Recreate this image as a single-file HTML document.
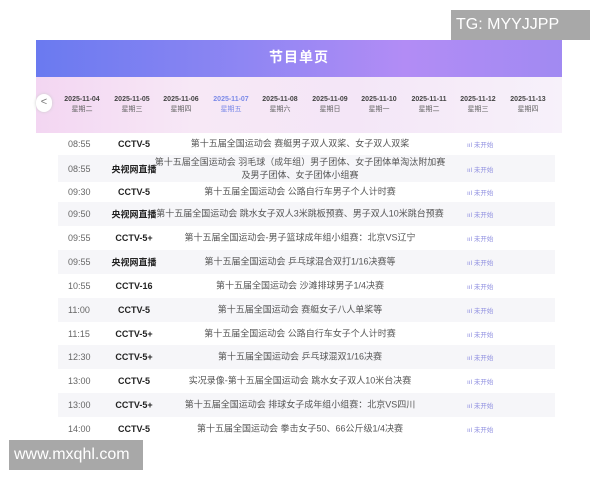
<!DOCTYPE html>
<html><head><meta charset="utf-8"><style>
*{margin:0;padding:0;box-sizing:border-box}
body{width:600px;height:480px;background:#fff;position:relative;overflow:hidden;font-family:"Liberation Sans","Noto Sans CJK SC",sans-serif}
.banner{position:absolute;left:36px;top:40px;width:526px;height:37px;background:linear-gradient(90deg,#6a7af0 0%,#8f86f3 40%,#b28cf5 70%,#a18af2 100%);color:#fff;font-size:14px;font-weight:bold;text-align:center;line-height:34px;letter-spacing:1px}
.dates{position:absolute;left:36px;top:77px;width:526px;height:56px;background:linear-gradient(90deg,#f3d6f2 0%,#f7e8f6 30%,#f4e6f7 60%,#f7f1fa 100%)}
.arrow{position:absolute;left:36px;top:94px;width:16px;height:18px;border-radius:9px;background:#fff;box-shadow:0 0 3px #ccc;color:#777;font-size:11px;text-align:center;line-height:17px}
.d{position:absolute;top:95px;width:50px;margin-left:-25px;text-align:center;font-size:7px;font-weight:bold;color:#444;line-height:10px}
.d span{display:block;font-weight:normal;color:#666}
.d.a,.d.a span{color:#7b8ae8}
.row{position:absolute;left:58px;width:497px;font-size:9px;color:#555}
.row.g{background:#f6f6f9}
.row div{position:absolute;top:50%;transform:translateY(-50%);white-space:nowrap}
.t{left:10px;color:#666;font-size:9px}
.c{left:48px;width:56px;text-align:center;font-weight:bold;color:#222;font-size:9px}
.x{left:92px;width:300px;text-align:center;line-height:13px}
.s{left:409px;color:#8e8ee0;font-size:6.5px}
.wm{position:absolute;background:#a8a8a8;color:#fff;font-size:16px;line-height:30px;padding-left:5px;white-space:nowrap}
</style></head><body>
<div class="banner">节目单页</div>
<div class="dates"></div>
<div class="arrow">&lt;</div>
<div class="d" style="left:82px">2025-11-04<span>星期二</span></div>
<div class="d" style="left:132px">2025-11-05<span>星期三</span></div>
<div class="d" style="left:181px">2025-11-06<span>星期四</span></div>
<div class="d a" style="left:231px">2025-11-07<span>星期五</span></div>
<div class="d" style="left:280px">2025-11-08<span>星期六</span></div>
<div class="d" style="left:330px">2025-11-09<span>星期日</span></div>
<div class="d" style="left:379px">2025-11-10<span>星期一</span></div>
<div class="d" style="left:429px">2025-11-11<span>星期二</span></div>
<div class="d" style="left:478px">2025-11-12<span>星期三</span></div>
<div class="d" style="left:528px">2025-11-13<span>星期四</span></div>

<div class="row" style="top:133px;height:22px"><div class="t">08:55</div><div class="c">CCTV-5</div><div class="x">第十五届全国运动会 赛艇男子双人双桨、女子双人双桨</div><div class="s">ııl 未开始</div></div>
<div class="row g" style="top:155px;height:27px"><div class="t">08:55</div><div class="c">央视网直播</div><div class="x">第十五届全国运动会 羽毛球（成年组）男子团体、女子团体单淘汰附加赛<br>及男子团体、女子团体小组赛</div><div class="s">ııl 未开始</div></div>
<div class="row" style="top:182px;height:20px"><div class="t">09:30</div><div class="c">CCTV-5</div><div class="x">第十五届全国运动会 公路自行车男子个人计时赛</div><div class="s">ııl 未开始</div></div>
<div class="row g" style="top:202px;height:24px"><div class="t">09:50</div><div class="c">央视网直播</div><div class="x">第十五届全国运动会 跳水女子双人3米跳板预赛、男子双人10米跳台预赛</div><div class="s">ııl 未开始</div></div>
<div class="row" style="top:226px;height:24px"><div class="t">09:55</div><div class="c">CCTV-5+</div><div class="x">第十五届全国运动会-男子篮球成年组小组赛：北京VS辽宁</div><div class="s">ııl 未开始</div></div>
<div class="row g" style="top:250px;height:24px"><div class="t">09:55</div><div class="c">央视网直播</div><div class="x">第十五届全国运动会 乒乓球混合双打1/16决赛等</div><div class="s">ııl 未开始</div></div>
<div class="row" style="top:274px;height:24px"><div class="t">10:55</div><div class="c">CCTV-16</div><div class="x">第十五届全国运动会 沙滩排球男子1/4决赛</div><div class="s">ııl 未开始</div></div>
<div class="row g" style="top:298px;height:24px"><div class="t">11:00</div><div class="c">CCTV-5</div><div class="x">第十五届全国运动会 赛艇女子八人单桨等</div><div class="s">ııl 未开始</div></div>
<div class="row" style="top:322px;height:23px"><div class="t">11:15</div><div class="c">CCTV-5+</div><div class="x">第十五届全国运动会 公路自行车女子个人计时赛</div><div class="s">ııl 未开始</div></div>
<div class="row g" style="top:345px;height:24px"><div class="t">12:30</div><div class="c">CCTV-5+</div><div class="x">第十五届全国运动会 乒乓球混双1/16决赛</div><div class="s">ııl 未开始</div></div>
<div class="row" style="top:369px;height:24px"><div class="t">13:00</div><div class="c">CCTV-5</div><div class="x">实况录像-第十五届全国运动会 跳水女子双人10米台决赛</div><div class="s">ııl 未开始</div></div>
<div class="row g" style="top:393px;height:24px"><div class="t">13:00</div><div class="c">CCTV-5+</div><div class="x">第十五届全国运动会 排球女子成年组小组赛：北京VS四川</div><div class="s">ııl 未开始</div></div>
<div class="row" style="top:417px;height:24px"><div class="t">14:00</div><div class="c">CCTV-5</div><div class="x">第十五届全国运动会 拳击女子50、66公斤级1/4决赛</div><div class="s">ııl 未开始</div></div>

<div class="wm" style="left:451px;top:10px;width:139px;height:30px">TG: MYYJJPP</div>
<div class="wm" style="left:9px;top:440px;width:134px;height:30px">www.mxqhl.com</div>
</body></html>
